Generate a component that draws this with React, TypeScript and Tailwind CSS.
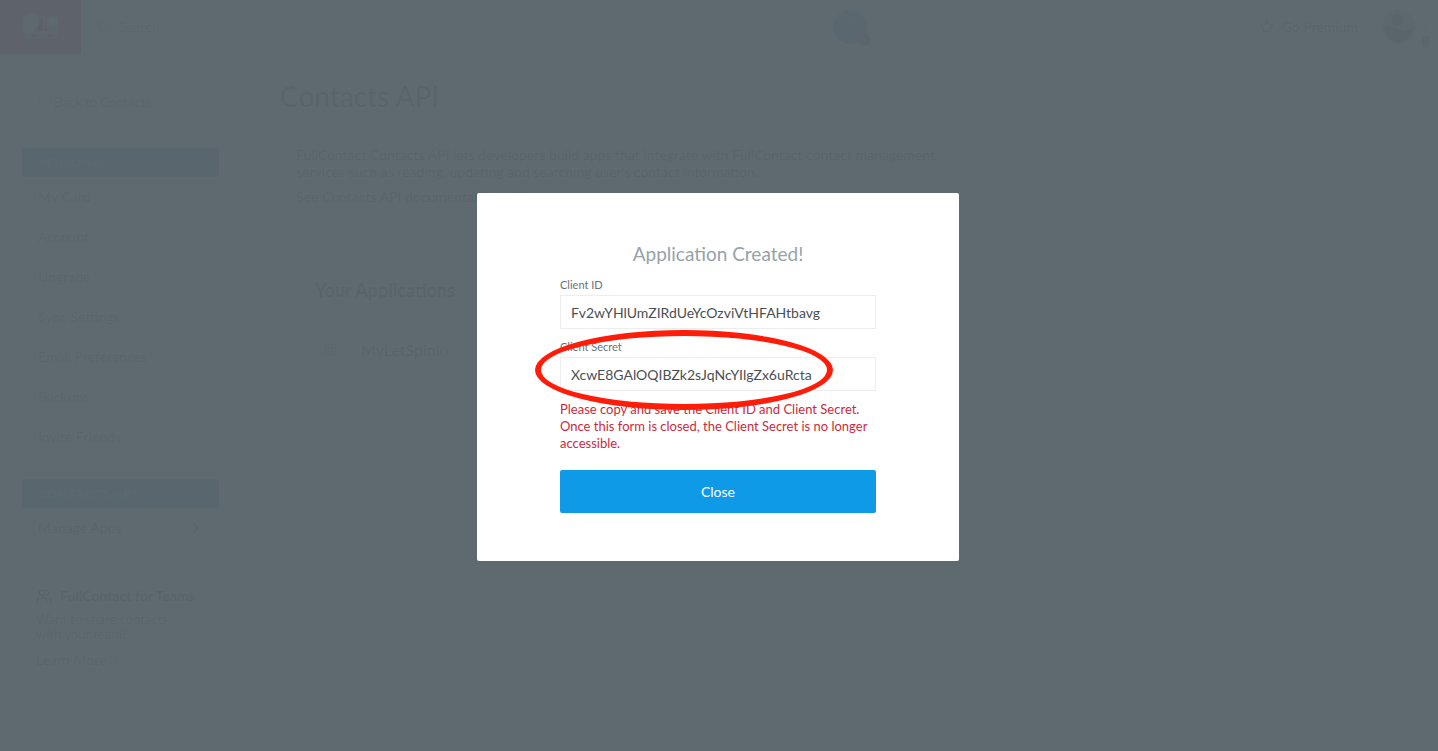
import { ChevronDown, ChevronLeft, ChevronRight, Clock, LayoutGrid, Search, Star, Users } from "lucide-react";

const personalLinks = [
  "My Card",
  "Account",
  "Upgrade",
  "Sync Settings",
  "Email Preferences",
  "Backups",
  "Invite Friends",
];

const credentials = [
  { id: "client-id", label: "Client ID", value: "Fv2wYHlUmZIRdUeYcOzviVtHFAHtbavg" },
  { id: "client-secret", label: "Client Secret", value: "XcwE8GAlOQIBZk2sJqNcYIlgZx6uRcta" },
];

function Header() {
  return (
    <header className="h-[54px] flex items-center border-b border-[#ececec]">
      <div className="w-[55%] flex items-center gap-4">
        <a href="#home" aria-label="Home" className="w-[81px] h-[54px] shrink-0 bg-[#f09cb8] flex items-center justify-center">
          <svg width="38" height="28" viewBox="0 0 38 28" fill="none">
            <rect x="2" y="3" width="34" height="23" rx="4" fill="#f4bccc" />
            <circle cx="9" cy="8" r="8" fill="#dce4e8" />
            <rect x="1" y="8" width="11" height="12" rx="4" fill="#dce4e8" />
            <rect x="27" y="4" width="9" height="10" rx="2" fill="#dce4e8" />
            <path d="M15 18l3-12h3v12zM23 7l3 11h-3zM9 24l3-3 3 3zM25 24l3-3 3 3z" fill="#d890a8" />
          </svg>
        </a>
        <label className="flex items-center gap-2 flex-1 text-[#cccfd0]">
          <Search size={14} />
          <input
            type="search"
            aria-label="Search"
            placeholder="Search"
            className="w-full text-sm outline-none placeholder:text-[#c4c8ca]"
          />
        </label>
      </div>
      <ChevronDown size={10} className="text-[#c4c8ca]" />
      <button aria-label="Recent activity" className="relative w-[34px] h-[34px] ml-8 rounded-full bg-[#b8d4ec] flex items-center justify-center text-[#cfdfea]">
        <Clock size={18} />
        <span className="absolute -right-1 -bottom-0.5 w-3 h-3 rounded-full bg-[#e8b4c4]" />
      </button>
      <div className="flex-1 flex items-center justify-end pr-2">
        <button className="flex items-center gap-2 text-sm text-[#b6babc]">
          <Star size={14} />
          Go Premium
        </button>
        <button aria-label="Profile" className="relative ml-6 flex items-center gap-1 text-[#b6babc]">
          <svg width="34" height="34" viewBox="0 0 34 34">
            <circle cx="17" cy="17" r="17" fill="#dfe3e3" />
            <circle cx="15" cy="10" r="6" fill="#b6babc" />
            <path d="M2 19q8-6 14 0t15-3q0 12-14 17Q6 32 2 19z" fill="#b6babc" />
          </svg>
          <ChevronDown size={10} />
          <span className="absolute right-0 -bottom-1 w-2 h-3 rounded-full bg-[#e8b4c4]" />
        </button>
      </div>
    </header>
  );
}

function SidebarHeading({ title }: { title: string }) {
  return (
    <h2 className="h-[29px] px-4 flex items-center rounded-xs bg-[#b0ced4] text-xs font-bold tracking-widest text-[#d2e0e4]">
      {title}
    </h2>
  );
}

function Sidebar() {
  return (
    <nav className="w-[197px] shrink-0 text-sm text-[#bcc0c2]">
      <a
        href="#contacts"
        className="h-[70px] pt-[38px] px-3 flex items-start gap-2 border-b border-[#ececec] text-[13px] leading-5"
      >
        <ChevronLeft size={12} className="mt-1" />
        Back to Contacts
      </a>
      <div className="pt-6">
        <SidebarHeading title="PERSONAL" />
        <ul>
          {personalLinks.map((link) => (
            <li key={link}>
              <a href="#settings" className="h-10 px-4 flex items-center">
                {link}
              </a>
            </li>
          ))}
        </ul>
      </div>
      <div className="pt-[22px]">
        <SidebarHeading title="CONTACTS API" />
        <a href="#apps" className="h-10 px-4 flex items-center justify-between text-[#acb0b2]">
          Manage Apps
          <ChevronRight size={14} />
        </a>
      </div>
      <div className="pt-[38px] px-3.5">
        <h3 className="flex items-center gap-2 font-bold whitespace-nowrap text-[#b0b4b6]">
          <Users size={16} />
          FullContact for Teams
        </h3>
        <p className="mt-1.5 text-[13px] leading-[15px]">
          Want to share contacts
          <br />
          with your team?
        </p>
        <a href="#teams" className="mt-2 flex items-center gap-1 leading-5">
          Learn More
          <ChevronRight size={12} />
        </a>
      </div>
    </nav>
  );
}

function Content() {
  return (
    <main className="flex-1 max-w-[688px] pt-6 text-sm text-[#b0b4b6]">
      <h1 className="text-[28px] leading-[36px]">Contacts API</h1>
      <div className="mt-8 px-4 leading-[17px]">
        <p>
          FullContact Contacts API lets developers build apps that integrate with FullContact contact management
          services such as reading, updating and searching user's contact information.
        </p>
        <p className="mt-2">
          See <a href="#docs">Contacts API documentation</a> to learn more.
        </p>
      </div>
      <section className="mt-12 px-[34px] pt-6 pb-4 border border-[#ececec]">
        <h2 className="text-lg leading-6 font-bold">Your Applications</h2>
        <div className="mt-9 px-2 flex items-center gap-6 text-base">
          <LayoutGrid size={14} className="text-[#c4c8ca]" />
          MyLetSpinio
        </div>
      </section>
    </main>
  );
}

function CreatedDialog() {
  return (
    <div
      role="dialog"
      aria-modal="true"
      aria-labelledby="dialog-title"
      className="relative w-[482px] bg-white rounded-xs px-[83px] py-12"
    >
      <h2 id="dialog-title" className="text-[19px] leading-[26px] text-center text-[#98a2a9]">
        Application Created!
      </h2>
      <form>
        {credentials.map((c) => (
          <div key={c.id} className="pt-3">
            <label htmlFor={c.id} className="block mb-1 text-[11px] leading-3 text-[#69727a]">
              {c.label}
            </label>
            <input
              id={c.id}
              readOnly
              defaultValue={c.value}
              className="block w-full h-[34px] px-2.5 border border-[#ededed] text-sm text-[#4b4f54] outline-none"
            />
          </div>
        ))}
        <p className="mt-2.5 text-[13px] leading-[17px] text-[#cc2a3c]">
          Please copy and save the Client ID and Client Secret. Once this form is closed, the Client Secret is no longer
          accessible.
        </p>
        <button type="button" className="mt-[18px] w-full h-[43px] rounded-xs bg-[#0f9ae8] text-sm text-white">
          Close
        </button>
      </form>

      {/* hand-drawn marker around the secret */}
      <svg
        className="absolute left-[57px] top-[136px] pointer-events-none"
        width="300"
        height="82"
        viewBox="0 0 300 82"
        fill="#ff1c08"
        fillRule="evenodd"
      >
        <path d="M1 41a149 40 0 1 0 298 0a149 40 0 1 0 -298 0zM7 41a143 34 0 1 0 286 0a143 34 0 1 0 -286 0z" />
      </svg>
    </div>
  );
}

export default function App() {
  return (
    <div className="min-h-screen bg-white font-['Lato',sans-serif]">
      <Header />
      <div className="flex gap-[61px] pl-[22px] pr-6">
        <Sidebar />
        <Content />
      </div>
      <div className="fixed inset-0 flex items-start justify-center pt-[193px] pr-0.5 bg-[#515d64]/92">
        <CreatedDialog />
      </div>
    </div>
  );
}
